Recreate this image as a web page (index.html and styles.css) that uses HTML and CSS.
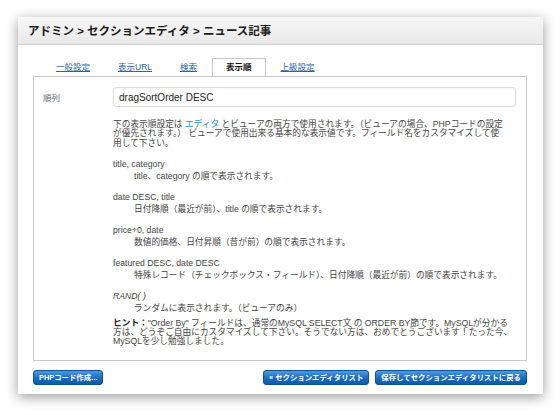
FILE: index.html
```html
<!DOCTYPE html>
<html lang="ja">
  <head>
    <meta charset="UTF-8" />
    <title>表示順</title>
    <link rel="stylesheet" href="styles.css">
  </head>
  <body>
    <div class="panel">
      <div class="panel-header">アドミン &gt; セクションエディタ &gt; ニュース記事</div>

      <div class="panel-body">
        <ul class="tabs">
          <li><a href="#">一般設定</a></li>
          <li><a href="#">表示URL</a></li>
          <li><a href="#">検索</a></li>
          <li class="active">表示順</li>
          <li><a href="#">上級設定</a></li>
        </ul>

        <div class="tab-box">
          <div class="field">
            <label for="orderBy">順列</label>
            <input id="orderBy" type="text" value="dragSortOrder DESC">
          </div>

          <div class="help">
            <p class="intro">
              下の表示順設定は <a href="#">エディタ</a> とビューアの両方で使用されます。（ビューアの場合、PHPコードの設定<br>
              が優先されます。） ビューアで使用出来る基本的な表示値です。フィールド名をカスタマイズして使<br>
              用して下さい。
            </p>

            <dl>
              <dt>title, category</dt>
              <dd>title、category の順で表示されます。</dd>

              <dt>date DESC, title</dt>
              <dd>日付降順（最近が前）、title の順で表示されます。</dd>

              <dt>price+0, date</dt>
              <dd>数値的価格、日付昇順（昔が前）の順で表示されます。</dd>

              <dt>featured DESC, date DESC</dt>
              <dd>特殊レコード（チェックボックス・フィールド）、日付降順（最近が前）の順で表示されます。</dd>

              <dt><em>RAND( )</em></dt>
              <dd>ランダムに表示されます。（ビューアのみ）</dd>
            </dl>

            <p class="hint">
              <strong>ヒント：</strong>"Order By" フィールドは、通常のMySQL SELECT文 の ORDER BY節です。MySQLが分かる<br>
              方は、どうぞご自由にカスタマイズして下さい。そうでない方は、おめでとうございます！たった今、<br>
              MySQLを少し勉強しました。
            </p>
          </div>
        </div>

        <div class="actions">
          <button class="btn">PHPコード作成...</button>
          <div class="actions-right">
            <button class="btn">« セクションエディタリスト</button>
            <button class="btn">保存してセクションエディタリストに戻る</button>
          </div>
        </div>
      </div>
    </div>
  </body>
</html>
```

FILE: styles.css
```css
body {
  margin: 0;
  padding: 17px 17px 18px 18px;
  background-color: #fff;
  font-family: "Liberation Sans", "Noto Sans CJK JP", sans-serif;
  color: #333;
}

.panel {
  width: 525px;
  height: 377px;
  background-color: #fff;
  box-shadow: 0 3px 12px rgba(0, 0, 0, 0.4);
  display: flex;
  flex-direction: column;
}

.panel-header {
  height: 27px;
  line-height: 28px;
  padding-left: 10px;
  font-size: 11.5px;
  font-weight: bold;
  color: #1a1a1a;
  background: linear-gradient(#f6f6f6, #e9e9e9);
  border-bottom: 1px solid #cfcfcf;
}

.panel-body {
  padding: 14px 16px 0 15px;
}

.tabs {
  list-style: none;
  display: flex;
  margin: 0;
  padding: 0 0 0 9px;
  height: 17px;
}

.tabs li {
  padding: 0 13px;
  margin: 0 1px;
  font-size: 8.5px;
  line-height: 17px;
}

.tabs a {
  color: #2c64a0;
}

.tabs .active {
  background-color: #fff;
  border: 1px solid #c8c8c8;
  border-bottom: none;
  height: 17px;
  line-height: 17px;
  font-weight: bold;
  color: #111;
  position: relative;
  z-index: 1;
  margin-top: -1px;
}

.tab-box {
  border: 1px solid #c8c8c8;
  padding: 10px 10px 13px 9px;
  font-size: 8.7px;
  color: #444;
}

.field {
  display: flex;
  align-items: center;
}

.field label {
  width: 70px;
  color: #666;
  font-size: 8.5px;
}

.field input {
  flex: 1;
  height: 20px;
  box-sizing: border-box;
  padding: 0 5px;
  border: 1px solid #dcdcdc;
  border-radius: 3px;
  font-family: "Liberation Sans", sans-serif;
  font-size: 10px;
  color: #222;
  box-shadow: inset 0 1px 2px rgba(0, 0, 0, 0.04);
}

.help {
  margin-left: 70px;
  padding-top: 13px;
}

.help p {
  margin: 0;
  line-height: 9.3px;
}

.help a {
  color: #1a8bd6;
  text-decoration: none;
}

.help dl {
  margin: 10px 0 5px;
}

.help dt,
.help dd {
  line-height: 12px;
}

.help dd {
  margin: 0 0 9px 21px;
}

.help dd:last-child {
  margin-bottom: 0;
}

.hint strong {
  color: #222;
}

.actions {
  display: flex;
  justify-content: space-between;
  margin-top: 9px;
}

.actions-right {
  display: flex;
  gap: 6px;
}

.btn {
  height: 15px;
  padding: 0 5px;
  border: 1px solid #0d5496;
  border-radius: 3px;
  background: linear-gradient(#4c9ae0, #1a6bbd 55%, #0f5aa8);
  color: #fff;
  font-family: "Liberation Sans", "Noto Sans CJK JP", sans-serif;
  font-size: 7.4px;
  font-weight: bold;
  line-height: 13px;
  cursor: pointer;
}
```
